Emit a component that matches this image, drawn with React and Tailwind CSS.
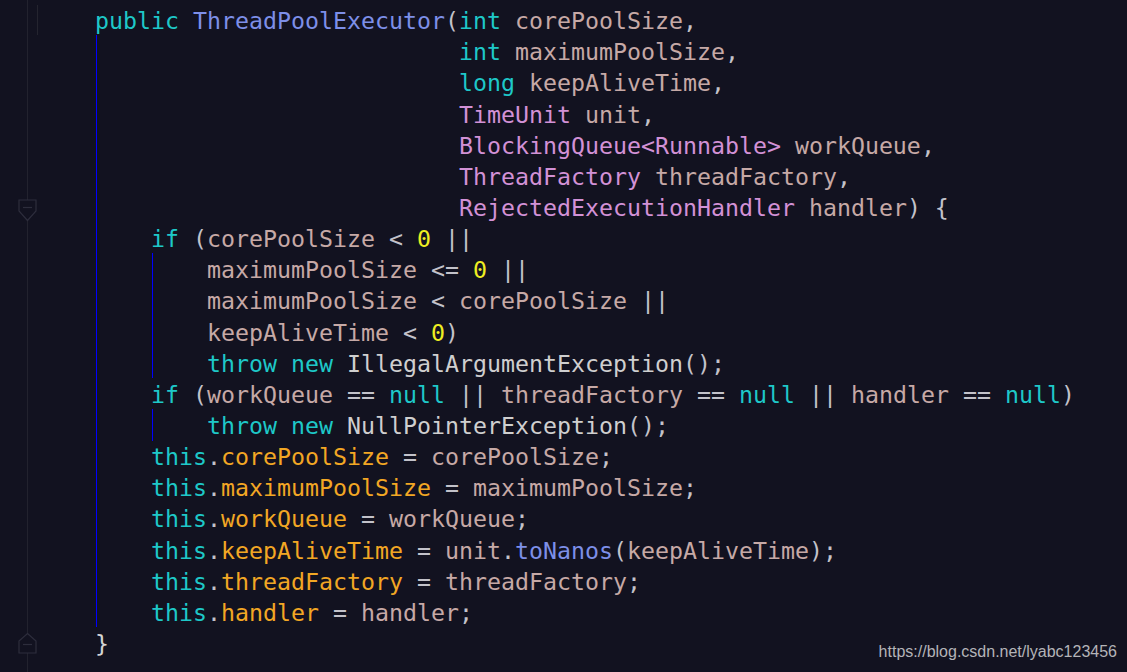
import React from "react";

const K = "text-[#1ec8c8]";
const M = "text-[#7d8fe8]";
const P = "text-[#c6a9a6]";
const T = "text-[#d291d6]";
const O = "text-[#c3c2ca]";
const N = "text-[#eeee22]";
const F = "text-[#f2a724]";
const C = "text-[#cfcfcf]";
const Y = "text-[#d8d820]";

const ind = (n) => " ".repeat(n);

const lines = [
  [[ind(5)], ["*/", Y]],
  [[ind(4)], ["public", K], [" "], ["ThreadPoolExecutor", M], ["(", O], ["int", K], [" "], ["corePoolSize", P], [",", O]],
  [[ind(30)], ["int", K], [" "], ["maximumPoolSize", P], [",", O]],
  [[ind(30)], ["long", K], [" "], ["keepAliveTime", P], [",", O]],
  [[ind(30)], ["TimeUnit", T], [" "], ["unit", P], [",", O]],
  [[ind(30)], ["BlockingQueue<Runnable>", T], [" "], ["workQueue", P], [",", O]],
  [[ind(30)], ["ThreadFactory", T], [" "], ["threadFactory", P], [",", O]],
  [[ind(30)], ["RejectedExecutionHandler", T], [" "], ["handler", P], [") {", O]],
  [[ind(8)], ["if", K], [" "], ["(", O], ["corePoolSize", P], [" < ", O], ["0", N], [" ||", O]],
  [[ind(12)], ["maximumPoolSize", P], [" <= ", O], ["0", N], [" ||", O]],
  [[ind(12)], ["maximumPoolSize", P], [" < ", O], ["corePoolSize", P], [" ||", O]],
  [[ind(12)], ["keepAliveTime", P], [" < ", O], ["0", N], [")", O]],
  [[ind(12)], ["throw", K], [" "], ["new", K], [" "], ["IllegalArgumentException", C], ["();", O]],
  [[ind(8)], ["if", K], [" "], ["(", O], ["workQueue", P], [" == ", O], ["null", K], [" || ", O], ["threadFactory", P], [" == ", O], ["null", K], [" || ", O], ["handler", P], [" == ", O], ["null", K], [")", O]],
  [[ind(12)], ["throw", K], [" "], ["new", K], [" "], ["NullPointerException", C], ["();", O]],
  [[ind(8)], ["this", K], [".", O], ["corePoolSize", F], [" = ", O], ["corePoolSize", P], [";", O]],
  [[ind(8)], ["this", K], [".", O], ["maximumPoolSize", F], [" = ", O], ["maximumPoolSize", P], [";", O]],
  [[ind(8)], ["this", K], [".", O], ["workQueue", F], [" = ", O], ["workQueue", P], [";", O]],
  [[ind(8)], ["this", K], [".", O], ["keepAliveTime", F], [" = ", O], ["unit", P], [".", O], ["toNanos", M], ["(", O], ["keepAliveTime", P], [");", O]],
  [[ind(8)], ["this", K], [".", O], ["threadFactory", F], [" = ", O], ["threadFactory", P], [";", O]],
  [[ind(8)], ["this", K], [".", O], ["handler", F], [" = ", O], ["handler", P], [";", O]],
  [[ind(4)], ["}", "text-[#d4d4d4]"]],
];

function FoldDown() {
  return (
    <svg width="19" height="24" viewBox="0 0 19 24" className="block">
      <path d="M1 1 H18 V12 L9.5 21.5 L1 12 Z" fill="#121220" stroke="#2d2d3c" strokeWidth="1.2" />
      <path d="M5 8.5 H14" stroke="#2d2d3c" strokeWidth="1.2" />
    </svg>
  );
}

function FoldUp() {
  return (
    <svg width="19" height="24" viewBox="0 0 19 24" className="block">
      <path d="M9.5 1.5 L18 9 V21 H1 V9 Z" fill="#121220" stroke="#2d2d3c" strokeWidth="1.2" />
      <path d="M5 12.5 H14" stroke="#2d2d3c" strokeWidth="1.2" />
    </svg>
  );
}

export default function App() {
  return (
    <div className="relative w-[1127px] h-[672px] overflow-hidden bg-[#121220]">
      <div className="flex h-full">
        <div className="w-[28px] shrink-0 border-r border-[#22222e]" />
        <div className="w-[11px] shrink-0" />
        <div className="-mt-[26px] font-['DejaVu_Sans_Mono',monospace] text-[23.25px] leading-[31.15px] whitespace-pre">
          {lines.map((ln, i) => (
            <div key={i} className="h-[31.15px]">
              {ln.map(([t, c], j) => (
                <span key={j} className={c || O}>
                  {t}
                </span>
              ))}
            </div>
          ))}
        </div>
      </div>

      {/* short indent guide in gutter */}
      <div className="absolute left-[37px] top-[5px] w-px h-[30px] bg-[#24242f]" />

      {/* indent guides (editor overlay) */}
      <div className="absolute left-[96px] top-[35px] w-px h-[592px] bg-[#0000ff]" />
      <div className="absolute left-[152px] top-[253px] w-px h-[125px] bg-[#0000ff]" />
      <div className="absolute left-[152px] top-[409px] w-px h-[32px] bg-[#0000ff]" />

      {/* fold markers */}
      <div className="absolute left-[18px] top-[199px]">
        <FoldDown />
      </div>
      <div className="absolute left-[18px] top-[632px]">
        <FoldUp />
      </div>

      {/* watermark */}
      <div className="absolute right-[10px] top-[642px] font-['Liberation_Sans',Arial,sans-serif] text-[16px] leading-[20px] text-[#b4b4b8]">
        https://blog.csdn.net/lyabc123456
      </div>
    </div>
  );
}
